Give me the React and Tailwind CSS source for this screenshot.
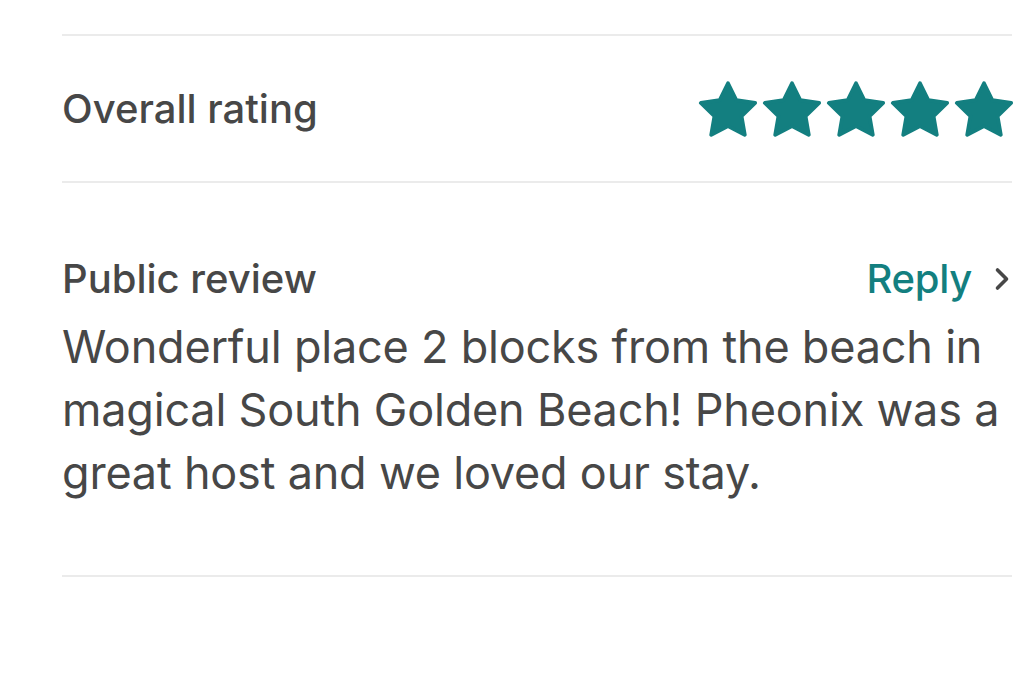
import { ChevronRight } from 'lucide-react';

function Star() {
  return (
    <svg className="w-[60px] h-[57px]" viewBox="1 1.3 22 21" fill="#137f80" stroke="#137f80" strokeWidth="1.4" strokeLinejoin="round">
      <path d="M12 2.5l3.09 6.26 6.91 1.01-5 4.87 1.18 6.88L12 18.27l-6.18 3.25L7 14.64 2 9.77l6.91-1.01z" />
    </svg>
  );
}

export default function App() {
  return (
    <div className="w-[1024px] h-[683px] bg-white font-['Inter',sans-serif] text-[#474747] pl-[62px] pr-[12px] pt-[34px] overflow-hidden">
      <div className="border-t-2 border-[#ebebeb]"></div>

      <div className="flex items-center justify-between h-[145px]">
        <span className="text-[40px] font-medium tracking-[0px]">Overall rating</span>
        <div className="flex gap-[4px] -mr-[2px]">
          {[0, 1, 2, 3, 4].map(i => <Star key={i} />)}
        </div>
      </div>

      <div className="border-t-2 border-[#ebebeb]"></div>

      <div className="pt-[70px]">
        <div className="flex items-center justify-between h-[52px]">
          <span className="text-[40px] font-medium tracking-[0px]">Public review</span>
          <span className="flex items-center text-[40px] font-medium text-[#137f80] tracking-[-0.3px]">
            Reply
            <ChevronRight className="w-[36px] h-[36px] ml-[12px] -mr-[8px] text-[#474747]" strokeWidth={2.4} />
          </span>
        </div>
        <p className="text-[45px] leading-[63px] tracking-[-0.2px] mt-[10px]">
          Wonderful place 2 blocks from the beach in magical South Golden Beach! Pheonix was a great host and we loved our stay.
        </p>
      </div>

      <div className="border-t-2 border-[#ebebeb] mt-[71px]"></div>
    </div>
  );
}
